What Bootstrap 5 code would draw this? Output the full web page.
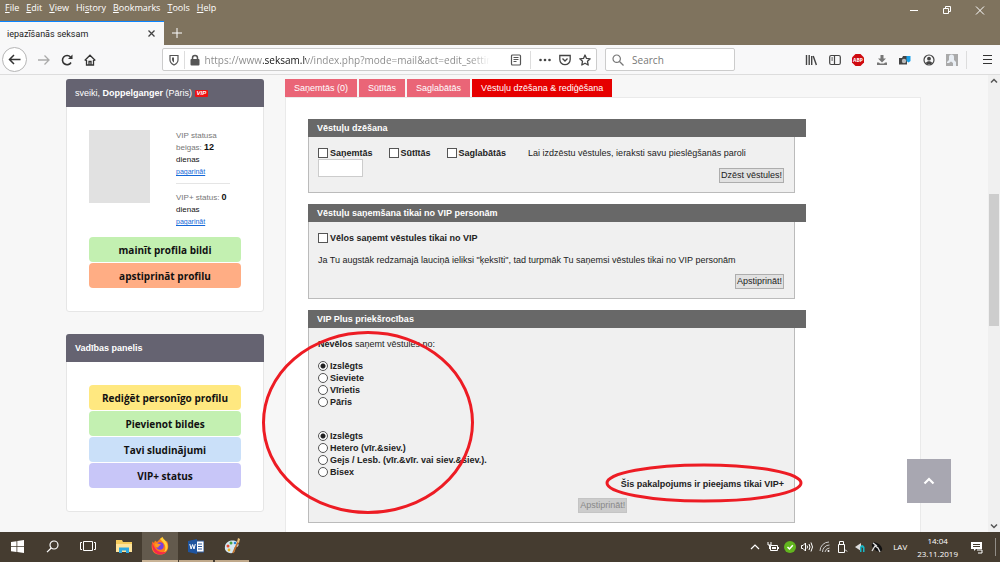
<!DOCTYPE html>
<html lang="lv">
<head>
<meta charset="utf-8">
<meta name="viewport" content="width=device-width, initial-scale=1">
<title>iepazīšanās seksam</title>
<link href="https://cdn.jsdelivr.net/npm/bootstrap@5.3.0/dist/css/bootstrap.min.css" rel="stylesheet">
<style>
body{font-family:"Liberation Sans",Arial,sans-serif;font-size:9px;line-height:12px;color:#222;background:#f7f7f7}
svg{display:block;flex:none}
.chrome,.taskbar,.side-btn{font-family:"Open Sans","Noto Sans",sans-serif}
.plain{background:none;border:0;padding:0;color:inherit;font:inherit}
/* browser chrome */
.menubar{background:#7f735e;color:#fff;font-size:9px;height:21px;padding:0 5px 6px}
.menubar nav{gap:7px}
.menubar a{color:#fff;text-decoration:none}
.menubar u{text-underline-offset:1px}
.win-btns{gap:21px;padding:6px 9px 0 0}
.tabstrip{background:#7f735e;height:24px}
.page-tab{width:164px;background:#f8f8f8;border-top:1px solid #0a84ff;font-family:Roboto,sans-serif;font-size:9px;padding:0 8px 0 7px;color:#222}
.toolbar{height:30px;background:#f8f8f9;border-bottom:1px solid #ddd;padding:0 8px 0 2px;color:#444}
.nav-left{gap:11px}
.back-btn{width:25px;height:25px;border:1px solid #b5b5b5;border-radius:50%;background:#fff}
.grow-a{flex:66 1 0}.grow-b{flex:70 1 0}
.urlbox{flex:426 1 0;height:23px;background:#fff;border:1px solid #ccc;border-radius:2px;padding:0 5px;min-width:0}
.searchbox{flex:117 1 0;height:23px;background:#fff;border:1px solid #ccc;border-radius:2px;padding:0 6px;margin-left:8px;min-width:0}
.bare{border:0;outline:0;padding:0;min-width:0;font-size:10px;line-height:16px}
.bare::placeholder{color:#777}
.address{color:transparent;-webkit-background-clip:text;background-clip:text;background-image:linear-gradient(90deg,#888 0 58px,#111 58px 101px,#888 101px 265px,transparent 285px)}
.sep{width:1px;height:18px;background:#ddd}
.tools{width:153px}
/* page */
.viewport{background:#f7f7f7;min-height:0}
.page-body{padding:4px 67px 0 66px;overflow:hidden;gap:21px}
.sidebar{width:198px;flex:none}
.panel{background:#fff;border:1px solid #e6e6e6;border-radius:3px;margin-bottom:22px}
.panel-head{background:#656371;color:#fff;font-size:9px;line-height:12px;padding:8px 9px;margin:-1px -1px 0;border-radius:3px 3px 0 0}
.panel-content{padding:23px 22px}
.profile{margin-bottom:9px}
.avatar{width:61px;height:73px;background:#e1e1e1}
.status{width:54px;margin-left:26px;font-size:8px;color:#777}
.status b,.status span{color:#111}
.status b{font-size:9px;line-height:1}
.status a{font-size:7px;color:#1468d8;display:block}
.status hr{margin:5px 0 8px;color:#999}
.stack{gap:1px}
.side-btn{height:25px;border:0;border-radius:4px;font-size:10px;font-weight:700;color:#111}
.vip-tag{background:#e11;color:#fff;font-size:6px;line-height:7px;padding:0 2px;border-radius:1px;font-style:italic;font-weight:700;display:inline-block;vertical-align:1px}
.c-green{background:#c3f0b1}.c-orange{background:#ffad84}.c-yellow{background:#ffe880}.c-blue{background:#cae0f9}.c-violet{background:#c8c6f8}
.mail-tabs{gap:2px}
.mail-tabs a{background:#ea6577;color:#fff;text-decoration:none;line-height:18px;padding:0 9px}
.mail-tabs a.active{background:#e60000}
.mail-panel{background:#fff;border:1px solid #eaeaea;padding:21px 125px 0 22px}
.option-box{position:relative;margin-bottom:11px}
.option-box h2{background:#686868;color:#fff;font-size:9px;line-height:12px;font-weight:700;padding:3px 9px;margin:0 -11px 0 0}
.option-body{background:#f0f0f0;border:1px solid #bbb;border-top:0;padding:10px 10px 9px 9px}
.option-note{margin:10px 0 8px}
.choices{margin:10px 0 22px}
.pick{display:flex;align-items:center;gap:2px;font-weight:700;line-height:12px;white-space:nowrap}
.pick input{appearance:none;width:10px;height:10px;margin:0;border:1px solid #555;background:#fff;flex:none}
.pick input[type=radio]{border-radius:50%}
.pick input[type=radio]:checked{background:radial-gradient(circle,#222 0 2px,#fff 3px)}
.form-btn{background:#e1e1e1;border:1px solid #adadad;font-size:9px;line-height:13px;padding:0 1px;color:#222;border-radius:0}
.form-btn:disabled{background:#ccc;border-color:#c4c4c4;color:#888}
.pass-row{height:24px}
.pass{width:45px;height:18px;border:1px solid #ccc;padding:0 3px}
.pass-hint{margin-left:22px}
.mark-left{position:absolute;left:-47px;top:20px}
.mark-right{position:absolute;right:-9px;top:152px}
.to-top{position:absolute;right:49px;bottom:29px;width:44px;height:44px;background:#a8a7b1;border:0}
.scroll{width:12px;flex:none;background:#f0f0f0;padding:3px 1px}
.scroll-thumb{flex:132 1 0;background:#cdcdcd}
/* taskbar */
.taskbar{height:30px;background:#453c30;color:#fff;font-size:8px}
.task{width:36px;border-bottom:2px solid transparent;display:flex;align-items:center;justify-content:center}
.task.first{width:34px}
.task.current{background:#635a4d;border-color:#c9b396}
.task.open{border-image:linear-gradient(90deg,transparent 3px,#c0a98b 3px 33px,transparent 33px) 2}
.tray{width:134px;margin-right:10px}
.clock{line-height:13px;margin:0 13px 0 10px}
.desk-sep{margin:0 4px 0 12px}
</style>
</head>
<body class="vh-100 d-flex flex-column overflow-hidden">
<header class="chrome flex-shrink-0">
  <div class="menubar d-flex justify-content-between">
    <nav class="d-flex align-items-center"><a href="#"><u>F</u>ile</a><a href="#"><u>E</u>dit</a><a href="#"><u>V</u>iew</a><a href="#">Hi<u>s</u>tory</a><a href="#"><u>B</u>ookmarks</a><a href="#"><u>T</u>ools</a><a href="#"><u>H</u>elp</a></nav>
    <div class="win-btns d-flex">
      <button class="plain" aria-label="Minimize"><svg width="12" height="9" fill="none" stroke="#fff"><path d="M2 4.500h8"/></svg></button>
      <button class="plain" aria-label="Restore"><svg width="12" height="9" fill="none" stroke="#fff"><path d="M2.500 2.500h5v5h-5zM4.500 2.500v-2h5v5h-2"/></svg></button>
      <button class="plain" aria-label="Close"><svg width="12" height="9" fill="none" stroke="#fff"><path d="M2 .5l8 8M10 .5l-8 8"/></svg></button>
    </div>
  </div>
  <div class="tabstrip d-flex">
    <div class="page-tab d-flex align-items-center justify-content-between"><span>iepazīšanās seksam</span><button class="plain" aria-label="Close tab"><svg width="9" height="9" stroke="#444" stroke-width="1.300"><path d="M1.500 1.500l6 6M7.500 1.500l-6 6"/></svg></button></div>
    <button class="plain ms-2" aria-label="New tab"><svg width="10" height="10" stroke="#fff"><path d="M0 5h10M5 0v10"/></svg></button>
  </div>
  <div class="toolbar d-flex align-items-center">
    <div class="nav-left d-flex align-items-center">
      <button class="plain back-btn d-flex align-items-center justify-content-center" aria-label="Back"><svg width="13" height="11" fill="none" stroke="#333" stroke-width="1.500"><path d="M12.500 5.500H2M6 1L1.500 5.500 6 10"/></svg></button>
      <button class="plain" aria-label="Forward"><svg width="12" height="12" fill="none" stroke="#aaa" stroke-width="1.300"><path d="M0 6h10M6.500 1.500L11 6l-4.500 4.500"/></svg></button>
      <button class="plain" aria-label="Reload"><svg width="12" height="12" fill="none" stroke="#333" stroke-width="1.600"><path d="M10 8.500A4.600 4.600 0 1 1 9.500 3"/><path d="M11.500.5V5H7z" fill="#333" stroke="none"/></svg></button>
      <button class="plain" aria-label="Home"><svg width="12" height="12" fill="none" stroke="#333" stroke-width="1.300"><path d="M.7 6.500L6 1.200l5.300 5.300M2.500 6v5h7V6M5 11V7.500h2V11"/></svg></button>
    </div>
    <div class="grow-a"></div>
    <div class="urlbox d-flex align-items-center">
      <svg width="12" height="12" fill="none" stroke="#555" stroke-width="1.200"><path d="M2 1.500h8V6c0 2.500-2 4-4 5-2-1-4-2.500-4-5z"/><path d="M6 3.500v5c-1-.7-2-1.500-2-2.700V3.500z" fill="#555" stroke="none"/></svg>
      <span class="sep mx-1"></span>
      <svg class="me-1" width="12" height="12"><rect x="1.500" y="5" width="9" height="6.500" rx="1" fill="#555"/><path d="M3.500 5.500V4a2.500 2.500 0 0 1 5 0v1.500" fill="none" stroke="#555" stroke-width="1.500"/></svg>
      <input class="bare address flex-grow-1" aria-label="Address" value="https://www.seksam.lv/index.php?mode=mail&amp;act=edit_settings">
      <div class="d-flex align-items-center gap-2">
        <svg width="12" height="12" fill="none" stroke="#555" stroke-width="1.200"><rect x="1.500" y="1" width="9" height="10" rx="1"/><path d="M3.500 3.500h5M3.500 5.500h5M3.500 7.500h3"/></svg>
        <span class="sep"></span>
        <svg width="12" height="12" fill="#444"><circle cx="1.500" cy="6" r="1.300"/><circle cx="6" cy="6" r="1.300"/><circle cx="10.500" cy="6" r="1.300"/></svg>
        <svg width="12" height="12" fill="none" stroke="#444" stroke-width="1.300"><path d="M.8 1.500h10.400v4a5.200 5.200 0 0 1-10.400 0zM3.500 4.500L6 7l2.500-2.500"/></svg>
        <svg width="12" height="12" fill="none" stroke="#444" stroke-width="1.300" stroke-linejoin="round"><path d="M6 1l1.500 3.400 3.700.4-2.700 2.500.7 3.700L6 9.200 2.800 11l.7-3.700L.8 4.800l3.700-.4z"/></svg>
      </div>
    </div>
    <div class="searchbox d-flex align-items-center">
      <svg class="me-2" width="12" height="12" fill="none" stroke="#777" stroke-width="1.200"><circle cx="4.700" cy="4.700" r="3.700"/><path d="M7.500 7.500l4 4"/></svg>
      <input class="bare w-100" type="search" placeholder="Search" aria-label="Search">
    </div>
    <div class="grow-b"></div>
    <div class="tools d-flex align-items-center justify-content-between">
      <svg width="12" height="12" stroke="#444" stroke-width="1.400"><path d="M1.500 1v10M4.200 1v10M6.700 2v9M8.200 2l3.200 9"/></svg>
      <svg width="12" height="12" fill="none" stroke="#444" stroke-width="1.200"><rect x=".7" y="1.500" width="10.600" height="9" rx="1.500"/><path d="M5.500 1.500v9M2.300 4h1.700M2.300 6h1.700"/></svg>
      <svg width="12" height="12"><path d="M3.500 0h5L12 3.500v5L8.500 12h-5L0 8.500v-5z" fill="#cf0a10"/><text x="6" y="8" font-size="5" font-weight="700" fill="#fff" text-anchor="middle">ABP</text></svg>
      <svg width="12" height="12" fill="#777"><path d="M4.500 1h3v3.500H10L6 8.500 2 4.500h2.500zM1 8.500h2l1 1h4l1-1h2V11H1z"/></svg>
      <svg width="12" height="12"><path d="M0 4h3l1-2h4v8.500H0z" fill="#444"/><circle cx="5" cy="7" r="2.200" fill="#bbb"/><path d="M7.500 2h4v5l-2 1.500-2-1.500z" fill="#1ba0e8"/></svg>
      <svg width="12" height="12"><circle cx="6" cy="6" r="5" fill="none" stroke="#444" stroke-width="1.200"/><circle cx="6" cy="4.700" r="1.900" fill="#444"/><path d="M2.800 9C4 6.700 8 6.700 9.200 9 8 10.600 4 10.600 2.800 9z" fill="#444"/></svg>
      <svg width="12" height="12"><path d="M0 0h12v12H0z" fill="#aaa"/><path d="M3 3a2 2 0 0 1 5 0v3l2 2v4H7V9L5 7.500 3 9H1V8l2-2z" fill="#e9eef4"/></svg>
    </div>
    <span class="sep ms-2"></span>
    <button class="plain ms-3" aria-label="Menu"><svg width="9" height="11" stroke="#333" stroke-width="1.200"><path d="M0 1.500h9M0 5.500h9M0 9.500h9"/></svg></button>
  </div>
</header>

<div class="viewport flex-grow-1 d-flex position-relative">
  <div class="page-body d-flex flex-grow-1">
    <aside class="sidebar">
      <section class="panel">
        <div class="panel-head">sveiki, <b>Doppelganger</b> (Pāris) <span class="vip-tag">VIP</span></div>
        <div class="panel-content">
          <div class="profile d-flex">
            <div class="avatar"></div>
            <div class="status">
              <div>VIP statusa beigas: <b>12</b> <span>dienas</span><a href="#">pagarināt</a></div>
              <hr>
              <div>VIP+ status: <b>0</b> <span>dienas</span><a href="#">pagarināt</a></div>
            </div>
          </div>
          <div class="stack d-grid"><button class="side-btn c-green">mainīt profila bildi</button><button class="side-btn c-orange">apstiprināt profilu</button></div>
        </div>
      </section>
      <section class="panel">
        <div class="panel-head fw-bold">Vadības panelis</div>
        <div class="panel-content stack d-grid">
          <button class="side-btn c-yellow">Rediģēt personīgo profilu</button><button class="side-btn c-green">Pievienot bildes</button><button class="side-btn c-blue">Tavi sludinājumi</button><button class="side-btn c-violet">VIP+ status</button>
        </div>
      </section>
    </aside>
    <main class="flex-grow-1 d-flex flex-column">
      <nav class="mail-tabs d-flex"><a href="#">Saņemtās (0)</a><a href="#">Sūtītās</a><a href="#">Saglabātās</a><a href="#" class="active">Vēstuļu dzēšana &amp; rediģēšana</a></nav>
      <div class="mail-panel flex-grow-1">
        <form class="option-box">
          <h2>Vēstuļu dzēšana</h2>
          <div class="option-body">
            <div class="d-flex">
              <label class="pick me-3"><input type="checkbox">Saņemtās</label>
              <label class="pick me-3"><input type="checkbox">Sūtītās</label>
              <label class="pick"><input type="checkbox">Saglabātās</label>
              <label class="pass-hint" for="pass">Lai izdzēstu vēstules, ieraksti savu pieslēgšanās paroli</label>
            </div>
            <div class="pass-row d-flex justify-content-between"><input class="pass" id="pass" type="password"><button type="button" class="form-btn align-self-end">Dzēst vēstules!</button></div>
          </div>
        </form>
        <form class="option-box">
          <h2>Vēstuļu saņemšana tikai no VIP personām</h2>
          <div class="option-body">
            <label class="pick"><input type="checkbox">Vēlos saņemt vēstules tikai no VIP</label>
            <p class="option-note">Ja Tu augstāk redzamajā lauciņā ieliksi "ķeksīti", tad turpmāk Tu saņemsi vēstules tikai no VIP personām</p>
            <div class="d-flex justify-content-end"><button type="button" class="form-btn">Apstiprināt!</button></div>
          </div>
        </form>
        <form class="option-box">
          <h2>VIP Plus priekšrocības</h2>
          <div class="option-body">
            <p class="m-0"><b>Nevēlos</b> saņemt vēstules no:</p>
            <div class="choices">
              <label class="pick"><input type="radio" name="who" checked>Izslēgts</label>
              <label class="pick"><input type="radio" name="who">Sieviete</label>
              <label class="pick"><input type="radio" name="who">Vīrietis</label>
              <label class="pick"><input type="radio" name="who">Pāris</label>
            </div>
            <div>
              <label class="pick"><input type="radio" name="kind" checked>Izslēgts</label>
              <label class="pick"><input type="radio" name="kind">Hetero (vīr.&amp;siev.)</label>
              <label class="pick"><input type="radio" name="kind">Gejs / Lesb. (vīr.&amp;vīr. vai siev.&amp;siev.).</label>
              <label class="pick"><input type="radio" name="kind">Bisex</label>
            </div>
            <div class="text-end fw-bold mb-2">Šis pakalpojums ir pieejams tikai VIP+</div>
            <div class="row g-0"><div class="col-5 offset-7"><button type="button" class="form-btn d-block ms-n3" style="margin-left:-6%" disabled>Apstiprināt!</button></div></div>
          </div>
          <svg class="mark-left pe-none" width="214" height="185" fill="none" stroke="#ed1c24" stroke-width="3"><ellipse cx="107" cy="92.500" rx="104.500" ry="90"/></svg>
          <svg class="mark-right pe-none" width="200" height="42" fill="none" stroke="#ed1c24" stroke-width="3"><ellipse cx="100" cy="21" rx="97" ry="18"/></svg>
        </form>
      </div>
    </main>
  </div>
  <button class="to-top d-flex align-items-center justify-content-center" aria-label="Uz augšu"><svg width="12" height="8" fill="none" stroke="#fff" stroke-width="2.200"><path d="M1.500 6.500L6 2l4.500 4.500"/></svg></button>
  <div class="scroll d-flex flex-column align-items-stretch" aria-hidden="true">
    <svg width="10" height="6" fill="none" stroke="#555" stroke-width="1.500"><path d="M2 4.500l3-3 3 3"/></svg>
    <div style="flex:109 1 0"></div><div class="scroll-thumb"></div><div style="flex:196 1 0"></div>
    <svg width="10" height="6" fill="none" stroke="#555" stroke-width="1.500"><path d="M2 1.500l3 3 3-3"/></svg>
  </div>
</div>

<footer class="taskbar d-flex align-items-stretch flex-shrink-0">
  <button class="plain task first" aria-label="Start"><svg width="13" height="13" fill="#fff"><path d="M0 2l5.500-.8v5H0zM6.300 1L13 0v6.200H6.300zM0 7h5.500v5L0 11.200zM6.300 7H13v6l-6.700-.9z"/></svg></button>
  <button class="plain task" aria-label="Search"><svg width="13" height="13" fill="none" stroke="#fff" stroke-width="1.200"><circle cx="8" cy="5" r="4"/><path d="M5.200 8L1 12.200"/></svg></button>
  <button class="plain task" aria-label="Task view"><svg width="16" height="12" fill="none" stroke="#fff"><path d="M3.500 1.500h9v9h-9zM2 2.500H.5v7H2M14 2.500h1.500v7H14"/></svg></button>
  <button class="plain task" aria-label="Files"><svg width="16" height="14"><path d="M0 1h6l1 2h9v10H0z" fill="#f5cb5c"/><path d="M0 5h16v8H0z" fill="#ffe49a"/><path d="M3 14V8.500h10V14h-3v-2.500H6V14z" fill="#2fa8e0"/></svg></button>
  <button class="plain task current" aria-label="Firefox"><svg width="18" height="18"><path d="M9 2c1-1 2-1.500 2.500-2 .5 2 2 2.500 3.500 4.500 1-.2 1-.5 1-.5 3 6 .5 13.500-7 13.500S-.8 11 1.500 4.500L3 6l1-2.500L6 5z" fill="#ff7a1a"/><path d="M11.500 0c.5 2 2 2.500 3.500 4.500 3 5 1.500 9-2 11 3-5 1-9-4-13.500z" fill="#ffd33a"/><path d="M1.500 5C0 12 4 17.500 9 17.500c3 0 5-1 6.500-3C9 17 3 13 1.500 5z" fill="#f5284d"/><circle cx="9" cy="9" r="3.700" fill="#7540e0"/><path d="M4 7c3-2 4 1 6 0-1 2-3 2-2.500 3.500C5 11 4 9 4 7z" fill="#ff9a20"/></svg></button>
  <button class="plain task open" aria-label="Word"><svg width="16" height="15"><path d="M8 2h8v11H8z" fill="#fff" stroke="#2b579a"/><path d="M10 5h4M10 7.500h4M10 10h4" stroke="#2b579a"/><path d="M0 2l9-2v15l-9-2z" fill="#1f559f"/><path d="M1.800 5l1.300 5L4.600 5.500 6 10l1.300-5" fill="none" stroke="#fff"/></svg></button>
  <button class="plain task open" aria-label="Paint"><svg width="17" height="16"><path d="M1 8c1-5 8-7 12-4 3 3 1 5-1 5s-2 2-1 3c0 3-4 4-7 2.500S.5 11 1 8z" fill="#d5e8f2"/><circle cx="4" cy="8" r="1.500" fill="#e34b31"/><circle cx="7" cy="5" r="1.500" fill="#47a345"/><circle cx="11" cy="5" r="1.300" fill="#2b86d9"/><circle cx="5" cy="12" r="1.400" fill="#edb522"/><path d="M9 15l5-11" stroke="#bf702b" stroke-width="1.800"/><path d="M13 4l1-4 2 1-1 4z" fill="#ebc27c"/></svg></button>
  <div class="ms-auto d-flex align-items-center">
    <div class="tray d-flex align-items-center justify-content-between">
      <svg width="12" height="12" fill="none" stroke="#fff" stroke-width="1.200"><path d="M2 8l4-4 4 4"/></svg>
      <svg width="12" height="12" fill="none" stroke="#fff"><path d="M3.500 4.500h7v5h-7zM11.500 6v2M1 1v3h3V1M2.500 4v4"/><path d="M5 6h4v2H5z" fill="#fff" stroke="none"/></svg>
      <svg width="12" height="12"><circle cx="6" cy="6" r="6" fill="#62b51e"/><path d="M3.500 6L5.500 8l3.300-3.700" fill="none" stroke="#fff" stroke-width="1.500"/></svg>
      <svg width="12" height="12" fill="none" stroke="#fff"><path d="M.5 4.500H2l2.500-2.500v8L2 7.500H.5zM6 4.500q1 1.500 0 3M8 3q2 3 0 6M10 1.500q3 4.500 0 9"/></svg>
      <svg width="12" height="12" fill="none" stroke="#ccc"><path d="M1 10A9 9 0 0 1 10 1M3.500 11A7 7 0 0 1 10.500 4M6 11a5 5 0 0 1 4.500-4"/><circle cx="9.500" cy="10" r="1" fill="#fff" stroke="none"/></svg>
      <svg width="12" height="12" fill="none" stroke="#fff"><path d="M3.500 3.500v-3h4v3M2.500 3.500h6v8h-6zM9 8.500l2 2"/></svg>
      <svg width="12" height="12"><path d="M1 6l6-4v8z" fill="#ddd"/><path d="M6 11V6q2-4 4.500 0v5H9V7L7.500 6v5z" fill="#18b8c8"/></svg>
      <svg width="12" height="12"><ellipse cx="6" cy="6" rx="6" ry="3.500" transform="rotate(40 6 6)" fill="#111"/><path d="M1 10l3-5 3 2 2 4M2 2l4 3" stroke="#ddd" stroke-width="1.300" fill="none"/></svg>
    </div>
    <span>LAV</span>
    <div class="clock text-center">14:04<br>23.11.2019</div>
    <svg width="12" height="13"><path d="M0 1h11v7H5l-2 2V8H0z" fill="#fff"/><path d="M2 3.500h7M2 5.500h7" stroke="#453c30"/><path d="M6 9h5v3H7" fill="none" stroke="#fff"/></svg>
    <span class="sep desk-sep opacity-50"></span>
  </div>
</footer>
<script src="https://cdn.jsdelivr.net/npm/bootstrap@5.3.0/dist/js/bootstrap.bundle.min.js"></script>
</body>
</html>
